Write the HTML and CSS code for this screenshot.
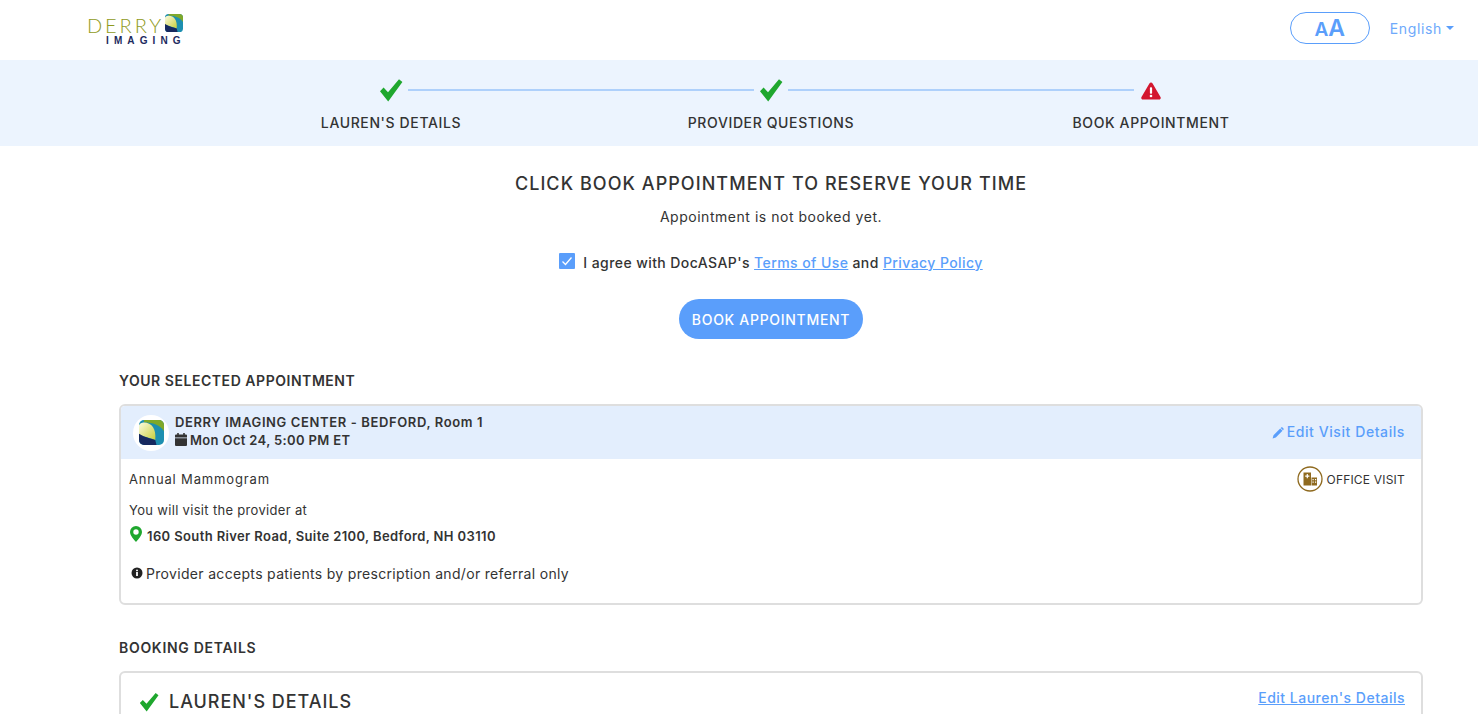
FILE: index.html
```html
<!DOCTYPE html>
<html lang="en">
<head>
<meta charset="utf-8">
<title>Book Appointment</title>
<link rel="stylesheet" href="styles.css">
</head>
<body>
<header class="topbar">
  <div class="logo">
    <div class="logo-top"><span class="logo-derry">DERRY</span>
      <svg class="logo-mark" viewBox="0 0 20 20"><defs><linearGradient id="lg1" x1="0" y1="0" x2="1" y2="1"><stop offset="0" stop-color="#fbfbe0"/><stop offset="1" stop-color="#c8cf3a"/></linearGradient></defs><rect width="20" height="20" rx="4" fill="#1d8fb0"/><path d="M4 0h12a4 4 0 0 1 4 4v5C17 4 11 2 4 2z" fill="#7fa82a"/><path d="M0 4a4 4 0 0 1 4-2c6 0 10 5 9 14C8 14 2 13 0 12z" fill="url(#lg1)"/><path d="M0 11c5 3 10 4 13 5l1 4H4a4 4 0 0 1-4-4z" fill="#16295f"/></svg>
    </div>
    <div class="logo-imaging">IMAGING</div>
  </div>
  <div class="top-actions">
    <button class="font-size" type="button"><span class="a-small">A</span><span class="a-big">A</span></button>
    <span class="lang">English<span class="caret"></span></span>
  </div>
</header>

<nav class="stepper">
  <div class="step">
    <div class="track"><span class="line off"></span><svg class="ic-check" viewBox="0 0 24 24"><path d="M1 13.2 4.6 9.6 9 14.2 20 1.2 23.4 4 9.2 23.4z" fill="#1fa72e"/></svg><span class="line"></span></div>
    <div class="step-label">LAUREN'S DETAILS</div>
  </div>
  <div class="step">
    <div class="track"><span class="line"></span><svg class="ic-check" viewBox="0 0 24 24"><path d="M1 13.2 4.6 9.6 9 14.2 20 1.2 23.4 4 9.2 23.4z" fill="#1fa72e"/></svg><span class="line"></span></div>
    <div class="step-label">PROVIDER QUESTIONS</div>
  </div>
  <div class="step">
    <div class="track"><span class="line"></span><svg class="ic-warn" viewBox="0 0 20 18"><path d="M10 .5c.7 0 1.2.4 1.6 1l7.9 13.6c.7 1.2-.1 2.4-1.4 2.4H1.900C.6 17.500-.2 16.300.5 15.100L8.400 1.500c.4-.6.900-1 1.600-1z" fill="#d3172f"/><rect x="8.900" y="5.300" width="2.200" height="6.400" rx=".8" fill="#fff"/><circle cx="10" cy="14" r="1.300" fill="#fff"/></svg><span class="line off"></span></div>
    <div class="step-label">BOOK APPOINTMENT</div>
  </div>
</nav>

<main class="page">
  <section class="confirm">
    <h1 class="confirm-title">CLICK BOOK APPOINTMENT TO RESERVE YOUR TIME</h1>
    <p class="confirm-note">Appointment is not booked yet.</p>
    <div class="agree">
      <span class="checkbox"><svg viewBox="0 0 16 16"><path d="M3.500 8.500 6.500 11.500 12.500 4.500" fill="none" stroke="#fff" stroke-width="1.300"/></svg></span>
      <span>I agree with DocASAP's <a href="#">Terms of Use</a> and <a href="#">Privacy Policy</a></span>
    </div>
    <button class="book" type="button">BOOK APPOINTMENT</button>
  </section>

  <h2 class="section-title">YOUR SELECTED APPOINTMENT</h2>
  <section class="card">
    <div class="card-head">
      <div class="avatar">
        <svg viewBox="0 0 20 20"><defs><linearGradient id="lg2" x1="0" y1="0" x2="1" y2="1"><stop offset="0" stop-color="#fbfbe0"/><stop offset="1" stop-color="#c8cf3a"/></linearGradient></defs><rect width="20" height="20" rx="4" fill="#1d8fb0"/><path d="M4 0h12a4 4 0 0 1 4 4v5C17 4 11 2 4 2z" fill="#7fa82a"/><path d="M0 4a4 4 0 0 1 4-2c6 0 10 5 9 14C8 14 2 13 0 12z" fill="url(#lg2)"/><path d="M0 11c5 3 10 4 13 5l1 4H4a4 4 0 0 1-4-4z" fill="#16295f"/></svg>
      </div>
      <div class="head-text">
        <div class="where">DERRY IMAGING CENTER - BEDFORD, Room 1</div>
        <div class="when"><svg class="ic-cal" viewBox="0 0 12 13"><path d="M2.200 0h1.600v1.500h4.400V0h1.600v1.500h1.200a1 1 0 0 1 1 1V4.500H0V2.500a1 1 0 0 1 1-1h1.200zM0 5.300h12V12a1 1 0 0 1-1 1H1a1 1 0 0 1-1-1z" fill="#333"/></svg>Mon Oct 24, 5:00 PM ET</div>
      </div>
      <a class="edit-visit" href="#"><svg class="ic-pencil" viewBox="0 0 12 12"><path d="M8.200 1.500 10.500 3.800 3.800 10.500.6 11.400 1.500 8.200zM9 .7c.5-.5 1.200-.5 1.700 0l.6.6c.5.500.5 1.200 0 1.700l-.3.300L8.700 1z" fill="#5a9efb"/></svg>Edit Visit Details</a>
    </div>
    <div class="card-body">
      <div class="row-between">
        <div class="service">Annual Mammogram</div>
        <div class="visit-type">
          <svg class="ic-office" viewBox="0 0 26 26"><circle cx="13" cy="13" r="12" fill="#fff" stroke="#8f6a1f" stroke-width="1.300"/><path d="M6.500 6.500h7.500v13H6.500zM14.500 11.500h5.500v8h-5.500z" fill="#8f6a1f"/><path d="M9.700 8h1.200v1.500h1.500v1.200h-1.500v1.500H9.700v-1.500H8.200V9.500h1.500zM15.500 13h1.200v1.200h-1.200zM18 13h1.200v1.200H18zM15.500 15.500h1.200v1.200h-1.200zM18 15.500h1.200v1.200H18z" fill="#fff"/></svg>
          OFFICE VISIT
        </div>
      </div>
      <p class="visit-at">You will visit the provider at</p>
      <div class="address"><svg class="ic-pin" viewBox="0 0 12 16"><path d="M6 0a6 6 0 0 1 6 6c0 3.500-4 7.500-6 10C4 13.500 0 9.500 0 6a6 6 0 0 1 6-6zm0 3.300a2.700 2.700 0 1 0 0 5.400 2.700 2.700 0 0 0 0-5.400z" fill="#1fa72e"/></svg>160 South River Road, Suite 2100, Bedford, NH 03110</div>
      <div class="notice"><svg class="ic-info" viewBox="0 0 12 12"><circle cx="6" cy="6" r="5.500" fill="#222"/><rect x="5.100" y="5" width="1.800" height="4" fill="#fff"/><rect x="5.100" y="2.700" width="1.800" height="1.500" fill="#fff"/></svg>Provider accepts patients by prescription and/or referral only</div>
    </div>
  </section>

  <h2 class="section-title booking">BOOKING DETAILS</h2>
  <section class="card details">
    <div class="details-head">
      <h3 class="details-title"><svg class="ic-check-sm" viewBox="0 0 24 24"><path d="M1 13.2 4.6 9.6 9 14.2 20 1.2 23.4 4 9.2 23.4z" fill="#1fa72e"/></svg>LAUREN'S DETAILS</h3>
      <a class="edit-link" href="#">Edit Lauren's Details</a>
    </div>
  </section>
</main>
</body>
</html>
```
FILE: styles.css
```css
* { box-sizing: border-box; }
html, body { margin: 0; height: 714px; overflow: hidden; }
body {
  font-family: "Inter", "Liberation Sans", sans-serif;
  color: #333;
  background: #fff;
}
a { color: #5a9efb; }

.topbar {
  height: 60px;
  display: flex;
  justify-content: space-between;
  align-items: center;
  padding: 0 24px 4px 87px;
}
.logo { width: 100px; margin-top: 4px; }
.logo-top { display: flex; align-items: center; height: 20px; }
.logo-derry {
  font-family: "Lato", sans-serif;
  font-weight: 300;
  font-size: 20px;
  letter-spacing: 2.9px;
  line-height: 18px;
  color: #8f9a1c;
}
.logo-mark { width: 18px; height: 18px; margin-left: 1px; margin-top: -3px; }
.logo-imaging {
  font-family: "Liberation Sans", sans-serif;
  font-weight: 700;
  font-size: 10px;
  line-height: 10px;
  letter-spacing: 5.100px;
  color: #1c2a5e;
  padding-left: 19px;
  margin-top: 1px;
  white-space: nowrap;
}
.top-actions { display: flex; align-items: center; gap: 20px; }
.font-size {
  width: 80px;
  height: 32px;
  border: 1px solid #5a9efb;
  border-radius: 16px;
  background: #fff;
  color: #5a9efb;
  font-family: inherit;
  font-weight: 600;
  padding: 0;
  line-height: 30px;
}
.a-small { font-size: 19px; }
.a-big { font-size: 23px; }
.lang { color: #6ea9fb; font-size: 14px; letter-spacing: .65px; display: flex; align-items: center; }
.caret {
  width: 0; height: 0; margin-left: 4px;
  border-left: 4px solid transparent;
  border-right: 4px solid transparent;
  border-top: 4px solid #5a9efb;
}

.stepper {
  height: 86px;
  background: #ecf4fe;
  display: flex;
  justify-content: center;
  padding-left: 64px;
}
.step { width: 380px; padding-top: 17px; }
.track { display: flex; align-items: center; height: 26px; }
.line { flex: 1; height: 2px; background: #aed0fb; }
.line.off { visibility: hidden; }
.ic-check { width: 24px; height: 24px; margin: 0 5px; flex: none; }
.ic-warn { width: 20px; height: 18px; margin: 2px 7px 0; flex: none; }
.step-label {
  margin-top: 10px;
  text-align: center;
  font-size: 14px;
  line-height: 20px;
  font-weight: 500;
  letter-spacing: .62px;
  color: #333;
}

.page { padding: 0 55px 0 119px; }
.confirm { display: flex; flex-direction: column; align-items: center; padding-top: 26px; }
.confirm-title {
  margin: 0;
  font-size: 18px;
  line-height: 24px;
  font-weight: 500;
  letter-spacing: 1.06px;
}
.confirm-note { margin: 11px 0 0; font-size: 14px; line-height: 20px; letter-spacing: .53px; }
.agree {
  display: flex;
  align-items: center;
  margin-top: 25px;
  height: 20px;
  font-size: 14px;
  font-weight: 500;
  letter-spacing: .42px;
}
.checkbox {
  width: 16px; height: 16px; margin-right: 8px; margin-top: -3px;
  background: #5a9efb;
  border-radius: 1px;
  display: block;
}
.checkbox svg { display: block; }
.book {
  margin-top: 27px;
  width: 184px;
  height: 40px;
  border: 0;
  border-radius: 20px;
  background: #5a9efb;
  color: #fff;
  font-family: inherit;
  font-size: 14px;
  font-weight: 500;
  letter-spacing: .7px;
  padding: 0;
}

.section-title {
  margin: 32px 0 0;
  font-size: 14px;
  line-height: 20px;
  font-weight: 600;
  letter-spacing: .54px;
}
.section-title.booking { margin-top: 33px; letter-spacing: .7px; }
.card {
  margin-top: 13px;
  border: 2px solid #dedede;
  border-radius: 6px;
  overflow: hidden;
}
.card-head {
  height: 53px;
  background: #e3eefd;
  display: flex;
  align-items: center;
  padding: 0 16px 0 12px;
  font-size: 13px;
  font-weight: 600;
  line-height: 18px;
}
.avatar {
  width: 36px; height: 36px;
  border-radius: 50%;
  background: #fff;
  display: flex;
  align-items: center;
  justify-content: center;
  margin-right: 6px;
}
.avatar svg { width: 25px; height: 25px; }
.head-text { flex: 1; margin-top: -3px; }
.where { letter-spacing: .62px; }
.when { display: flex; align-items: center; letter-spacing: .35px; }
.ic-cal { width: 12px; height: 13px; margin-right: 3px; margin-top: -2px; }
.edit-visit {
  display: flex; align-items: center;
  text-decoration: none;
  font-size: 14px;
  font-weight: 500;
  letter-spacing: .58px;
  margin-top: -2px;
}
.ic-pencil { width: 12px; height: 12px; margin-right: 3px; margin-top: 2px; }

.card-body { padding: 8px 16px 0 8px; height: 144px; font-size: 13px; letter-spacing: .35px; }
.row-between { display: flex; justify-content: space-between; align-items: center; height: 24px; }
.service { letter-spacing: .85px; }
.visit-type { display: flex; align-items: center; font-size: 12px; letter-spacing: .2px; }
.ic-office { width: 26px; height: 26px; margin-right: 4px; }
.visit-at { margin: 11px 0 0; line-height: 16px; letter-spacing: .32px; }
.address { display: flex; align-items: center; margin-top: 8px; height: 20px; font-weight: 600; letter-spacing: .38px; }
.ic-pin { width: 12px; height: 16px; margin: -4px 5px 0 1px; }
.notice { display: flex; align-items: center; margin-top: 17px; height: 20px; font-size: 14px; letter-spacing: .32px; }
.ic-info { width: 12px; height: 12px; margin: 0 3px 0 2px; }

.details { height: 120px; }
.details-head { display: flex; justify-content: space-between; padding: 14px 16px 0 18px; }
.details-title {
  margin: 3px 0 0;
  display: flex; align-items: center;
  font-size: 18px; line-height: 24px; font-weight: 500; letter-spacing: .96px;
}
.ic-check-sm { width: 20px; height: 20px; margin-right: 10px; }
.edit-link { font-size: 14px; line-height: 20px; font-weight: 500; letter-spacing: .49px; margin-top: 1px; }
```
